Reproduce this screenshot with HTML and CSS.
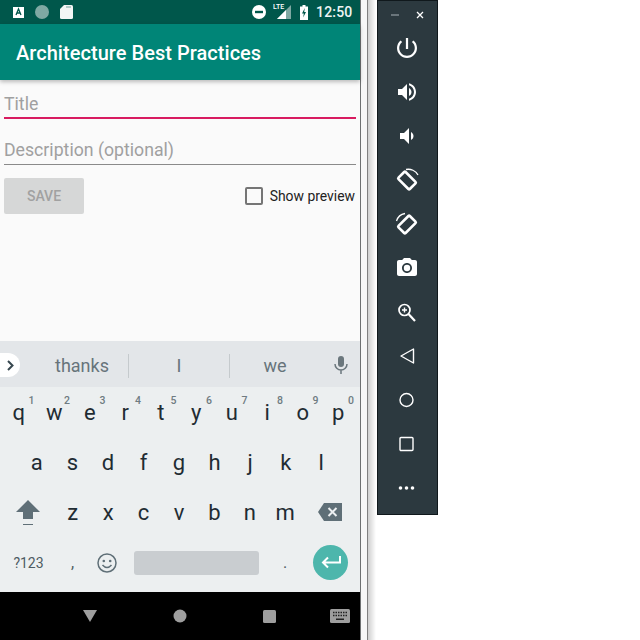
FILE: index.html
```html
<!DOCTYPE html>
<html lang="en">
<head>
    <meta charset="UTF-8">
    <meta name="viewport" content="width=device-width, initial-scale=1.0">
    <title>Architecture Best Practices</title>
    <link rel="stylesheet" href="styles.css">
</head>
<body>
<div class="desktop">

    <!-- Phone screen -->
    <div class="phone">
        <div class="status-bar">
            <div class="status-left">
                <svg width="11" height="11" viewBox="0 0 11 11"><rect width="11" height="11" fill="#fff"/><path d="M3 8 L5.500 2 L8 8 M4 6 H7" fill="none" stroke="#00574b" stroke-width="1.300"/></svg>
                <svg width="14" height="14" viewBox="0 0 14 14"><circle cx="7" cy="7" r="7" fill="#7fa9a3"/></svg>
                <svg width="13" height="14" viewBox="0 0 13 14"><path d="M4 0 H11.500 Q13 0 13 1.500 V12.500 Q13 14 11.500 14 H1.500 Q0 14 0 12.500 V4 Z" fill="#f2f6f5"/><path d="M6 2 H11" stroke="#9dbdb8" stroke-width="1.500"/></svg>
            </div>
            <div class="status-right">
                <svg width="14" height="14" viewBox="0 0 14 14"><circle cx="7" cy="7" r="7" fill="#fff"/><rect x="3" y="5.800" width="8" height="2.400" fill="#00574b"/></svg>
                <div class="signal">
                    <span class="lte">LTE</span>
                    <svg width="14" height="14" viewBox="0 0 14 14"><path d="M14 0 V14 H0 Z" fill="#7fa9a3"/><path d="M9 5 V14 H0 Z" fill="#fff"/></svg>
                </div>
                <svg class="battery" width="8" height="15" viewBox="0 0 8 15"><path d="M2.500 0 H5.500 V1.500 H8 V15 H0 V1.500 H2.500 Z" fill="#fff"/><path d="M4.800 3 L2 8.500 H3.800 L3.200 12.500 L6 7 H4.200 Z" fill="#00574b"/></svg>
                <span class="clock">12:50</span>
            </div>
        </div>
        <div class="app-bar">Architecture Best Practices</div>

        <div class="content">
            <div class="field field-active">Title</div>
            <div class="field">Description (optional)</div>
            <div class="actions">
                <button class="save-btn">SAVE</button>
                <label class="preview"><span class="checkbox"></span>Show preview</label>
            </div>
        </div>

        <!-- Keyboard -->
        <div class="suggestions">
            <span class="chevron">
                <svg width="7" height="11" viewBox="0 0 7 11"><path d="M1 1 L5.500 5.500 L1 10" fill="none" stroke="#37474f" stroke-width="2"/></svg>
            </span>
            <span class="word word-1">thanks</span>
            <span class="word word-2">I</span>
            <span class="word word-3">we</span>
            <svg class="mic" width="14" height="18" viewBox="0 0 14 18"><rect x="4" y="0" width="6" height="11" rx="3" fill="#6b777d"/><path d="M1 8 A6 6 0 0 0 13 8 M7 14 V18" fill="none" stroke="#6b777d" stroke-width="1.500"/></svg>
        </div>
        <div class="keys">
            <div class="row row-top">
                <span class="key">q<sup>1</sup></span>
                <span class="key">w<sup>2</sup></span>
                <span class="key">e<sup>3</sup></span>
                <span class="key">r<sup>4</sup></span>
                <span class="key">t<sup>5</sup></span>
                <span class="key">y<sup>6</sup></span>
                <span class="key">u<sup>7</sup></span>
                <span class="key">i<sup>8</sup></span>
                <span class="key">o<sup>9</sup></span>
                <span class="key">p<sup>0</sup></span>
            </div>
            <div class="row row-mid">
                <span class="key">a</span>
                <span class="key">s</span>
                <span class="key">d</span>
                <span class="key">f</span>
                <span class="key">g</span>
                <span class="key">h</span>
                <span class="key">j</span>
                <span class="key">k</span>
                <span class="key">l</span>
            </div>
            <div class="row row-low">
                <span class="key key-side">
                    <svg width="24" height="25" viewBox="0 0 24 25"><path d="M12 0 L24 12 H17 V19 H7 V12 H0 Z" fill="#5f6f77"/><rect x="7" y="24" width="10" height="1" fill="#5f6f77"/></svg>
                </span>
                <span class="key">z</span>
                <span class="key">x</span>
                <span class="key">c</span>
                <span class="key">v</span>
                <span class="key">b</span>
                <span class="key">n</span>
                <span class="key">m</span>
                <span class="key key-side">
                    <svg width="24" height="18" viewBox="0 0 24 18"><path d="M6 0 H24 V18 H6 L0 9 Z" fill="#5f6f77"/><path d="M10.500 5 L18.500 13 M18.500 5 L10.500 13" stroke="#eceff1" stroke-width="2"/></svg>
                </span>
            </div>
            <div class="row row-bottom">
                <span class="sym">?123</span>
                <span class="punct comma">,</span>
                <svg class="smile" width="20" height="20" viewBox="0 0 20 20"><circle cx="10" cy="10" r="9" fill="none" stroke="#5f6f77" stroke-width="1.500"/><circle cx="6.800" cy="8" r="1.300" fill="#5f6f77"/><circle cx="13.200" cy="8" r="1.300" fill="#5f6f77"/><path d="M5.500 12 Q10 17 14.500 12" fill="none" stroke="#5f6f77" stroke-width="1.500"/></svg>
                <span class="spacebar"></span>
                <span class="punct period">.</span>
                <span class="enter">
                    <svg width="20" height="13" viewBox="0 0 20 13"><path d="M19 0 V6.500 H2 M7 1.500 L2 6.500 L7 11.500" fill="none" stroke="#fff" stroke-width="2"/></svg>
                </span>
            </div>
        </div>

        <div class="nav-bar">
            <svg class="nav-back" width="14" height="12" viewBox="0 0 14 12"><path d="M0 0 H14 L7 12 Z" fill="#9e9e9e"/></svg>
            <svg class="nav-home" width="14" height="14" viewBox="0 0 14 14"><circle cx="7" cy="7" r="6.500" fill="#9e9e9e"/></svg>
            <svg class="nav-recent" width="13" height="13" viewBox="0 0 13 13"><rect width="13" height="13" rx="1.500" fill="#9e9e9e"/></svg>
            <svg class="nav-kbd" width="20" height="14" viewBox="0 0 20 14"><rect width="20" height="14" rx="1.500" fill="#9e9e9e"/><path d="M3 3.500 H17 M3 6.500 H17" stroke="#222" stroke-width="1.500" stroke-dasharray="1.500 1"/><rect x="6" y="9.500" width="8" height="1.500" fill="#222"/></svg>
        </div>
    </div>

    <div class="window-edge"></div>

    <!-- Emulator side toolbar -->
    <div class="toolbar">
        <div class="window-btns">
            <svg width="8" height="8" viewBox="0 0 8 8"><path d="M0 4 H8" stroke="#8d979c" stroke-width="1.300"/></svg>
            <svg width="8" height="8" viewBox="0 0 8 8"><path d="M1 1 L7 7 M7 1 L1 7" stroke="#fff" stroke-width="1.300"/></svg>
        </div>
        <svg class="tool" viewBox="3 3 18 18"><path fill="#fff" d="M13 3h-2v10h2V3zm4.830 2.170l-1.420 1.420C17.990 7.860 19 9.810 19 12c0 3.870-3.130 7-7 7s-7-3.130-7-7c0-2.190 1.010-4.140 2.580-5.420L6.170 5.170C4.230 6.820 3 9.260 3 12c0 4.970 4.030 9 9 9s9-4.030 9-9c0-2.740-1.230-5.180-3.170-6.830z"/></svg>
        <svg class="tool" viewBox="2 2 20 20"><path fill="#fff" d="M3 9v6h4l5 5V4L7 9H3zm13.500 3c0-1.770-1.020-3.290-2.500-4.030v8.050c1.480-.73 2.500-2.250 2.500-4.020zM14 3.230v2.060c2.890.86 5 3.540 5 6.710s-2.110 5.850-5 6.710v2.060c4.010-.91 7-4.490 7-8.770s-2.990-7.860-7-8.770z"/></svg>
        <svg class="tool" viewBox="2 2 20 20"><path fill="#fff" d="M18.500 12c0-1.770-1.020-3.290-2.500-4.030v8.050c1.480-.73 2.500-2.250 2.500-4.020zM5 9v6h4l5 5V4L9 9H5z"/></svg>
        <svg class="tool tool-rotate" viewBox="0 0 24 24"><rect x="7" y="4.500" width="10" height="16" rx="1" transform="rotate(-45 12 12.500)" fill="none" stroke="#fff" stroke-width="2.600"/><path d="M11 1.500 A11 11 0 0 1 23 7" fill="none" stroke="#fff" stroke-width="1.300"/></svg>
        <svg class="tool tool-rotate" viewBox="0 0 24 24"><rect x="7" y="4.500" width="10" height="16" rx="1" transform="rotate(45 12 12.500)" fill="none" stroke="#fff" stroke-width="2.600"/><path d="M1.500 9 A11 11 0 0 1 10 1.500" fill="none" stroke="#fff" stroke-width="1.300"/></svg>
        <svg class="tool" viewBox="2 2 20 20"><circle cx="12" cy="12" r="3.200" fill="#fff"/><path fill="#fff" d="M9 2L7.170 4H4c-1.100 0-2 .9-2 2v12c0 1.100.9 2 2 2h16c1.100 0 2-.9 2-2V6c0-1.100-.9-2-2-2h-3.170L15 2H9zm3 15c-2.760 0-5-2.240-5-5s2.240-5 5-5 5 2.240 5 5-2.240 5-5 5z"/></svg>
        <svg class="tool" viewBox="0 0 20 20"><circle cx="7.500" cy="8" r="5.500" fill="none" stroke="#fff" stroke-width="1.700"/><path d="M5 8 H10 M7.500 5.500 V10.500" stroke="#fff" stroke-width="1.400"/><path d="M11.500 12 L18 19" stroke="#fff" stroke-width="2.200"/></svg>
        <svg class="tool" viewBox="0 0 20 20"><path d="M16.500 3 V17 L4 10 Z" fill="none" stroke="#fff" stroke-width="1.400" stroke-linejoin="round"/></svg>
        <svg class="tool" viewBox="0 0 20 20"><circle cx="9.500" cy="10" r="6.500" fill="none" stroke="#fff" stroke-width="1.400"/></svg>
        <svg class="tool" viewBox="0 0 20 20"><rect x="3" y="3.500" width="13" height="13" rx="1" fill="none" stroke="#fff" stroke-width="1.400"/></svg>
        <svg class="tool" viewBox="0 0 20 20"><circle cx="3.500" cy="10" r="1.800" fill="#fff"/><circle cx="9.500" cy="10" r="1.800" fill="#fff"/><circle cx="15.500" cy="10" r="1.800" fill="#fff"/></svg>
    </div>
</div>
</body>
</html>
```
FILE: styles.css
```css
* {
    box-sizing: border-box;
}

body {
    margin: 0;
    background: #fff;
    font-family: Roboto, "Liberation Sans", sans-serif;
}

.desktop {
    display: flex;
    align-items: flex-start;
    width: 640px;
    height: 640px;
    overflow: hidden;
}

/* Phone */
.phone {
    display: flex;
    flex-direction: column;
    width: 360px;
    height: 640px;
    flex-shrink: 0;
}

.status-bar {
    display: flex;
    justify-content: space-between;
    align-items: center;
    height: 24px;
    background: #00574b;
    padding: 0 8px 0 13px;
    color: #fff;
}

.status-left {
    display: flex;
    align-items: center;
    gap: 11px;
}

.status-right {
    display: flex;
    align-items: center;
}

.signal {
    position: relative;
    display: flex;
    margin-left: 11px;
}

.lte {
    position: absolute;
    left: -4px;
    top: -2px;
    font-size: 7px;
    font-weight: 500;
}

.battery {
    margin-left: 9px;
}

.clock {
    width: 36px;
    margin-left: 8px;
    font-size: 14px;
    font-weight: 500;
    letter-spacing: 0.2px;
    color: #eef5f4;
}

.app-bar {
    display: flex;
    align-items: center;
    height: 56px;
    background: #008577;
    padding: 2px 0 0 16px;
    color: #fff;
    font-size: 20px;
    font-weight: 500;
    letter-spacing: 0.04px;
    position: relative;
    box-shadow: 0 2px 4px rgba(0, 0, 0, 0.25);
}

.content {
    flex: 1;
    background: #fafafa;
    padding: 0 4px;
}

.field {
    height: 32px;
    margin-top: 7px;
    padding-top: 5px;
    border-bottom: 1px solid #8a8a8a;
    color: #a0a0a0;
    font-size: 17.7px;
    line-height: 24px;
}

.field-active {
    height: 32px;
    margin-top: 7px;
    border-bottom: 2px solid #d81b60;
}

.field + .field {
    margin-top: 14px;
}

.actions {
    display: flex;
    justify-content: space-between;
    align-items: center;
    margin-top: 13px;
}

.save-btn {
    width: 80px;
    height: 36px;
    border: none;
    border-radius: 2px;
    background: #d6d7d7;
    color: #a1a1a1;
    font-family: inherit;
    font-size: 14px;
    font-weight: 500;
}

.preview {
    display: flex;
    align-items: center;
    gap: 7px;
    margin-right: 1px;
    font-size: 13.9px;
    color: #222;
}

.checkbox {
    width: 18px;
    height: 18px;
    border: 2px solid #757575;
    border-radius: 2px;
}

/* Keyboard */
.suggestions {
    position: relative;
    height: 46px;
    background: #e3e6e9;
    color: #67747b;
    font-size: 18px;
}

.chevron {
    position: absolute;
    left: 0;
    top: 12px;
    display: flex;
    align-items: center;
    justify-content: center;
    width: 20px;
    height: 24px;
    background: #fff;
    border-radius: 0 12px 12px 0;
}

.word {
    position: absolute;
    top: 0;
    height: 46px;
    line-height: 50px;
    text-align: center;
}

.word-1 {
    left: 30px;
    width: 104px;
}

.word-2 {
    left: 128px;
    width: 102px;
    border-left: 1px solid #c5cacd;
    border-right: 1px solid #c5cacd;
    height: 24px;
    top: 13px;
    line-height: 24px;
}

.word-3 {
    left: 230px;
    width: 90px;
}

.mic {
    position: absolute;
    left: 334px;
    top: 15px;
}

.keys {
    height: 205px;
    background: #eceff0;
    color: #1f2c33;
    font-size: 22px;
}

.row {
    display: flex;
    align-items: center;
}

.row-top {
    height: 50px;
    padding: 0 4px 0 1px;
}

.row-mid {
    height: 50px;
    padding: 0 21px 0 19px;
}

.row-low {
    height: 50px;
    padding: 0 3px 0 1px;
}

.row-bottom {
    position: relative;
    height: 51px;
}

.key {
    position: relative;
    flex: 1;
    text-align: center;
}

.key sup {
    position: absolute;
    top: -5px;
    right: 2px;
    font-size: 10.5px;
    line-height: 12px;
    color: #6f7b81;
    font-weight: 500;
}

.key-side {
    flex: 0 0 54px;
    display: flex;
    justify-content: center;
}

.sym {
    width: 57px;
    text-align: center;
    font-size: 14px;
    color: #4e5c63;
}

.punct {
    font-size: 16px;
    color: #4e5c63;
    text-align: center;
}

.comma {
    width: 31px;
}

.smile {
    margin-left: 9px;
}

.spacebar {
    width: 125px;
    height: 24px;
    margin-left: 17px;
    border-radius: 3px;
    background: #c9cdd0;
}

.period {
    width: 52px;
}

.enter {
    display: flex;
    align-items: center;
    justify-content: center;
    width: 35px;
    height: 35px;
    margin-left: 2px;
    border-radius: 50%;
    background: #4db6ac;
}

.nav-bar {
    position: relative;
    display: flex;
    align-items: center;
    height: 48px;
    background: #000;
}

.nav-back {
    margin-left: 83px;
}

.nav-home {
    margin-left: 76px;
}

.nav-recent {
    margin-left: 76px;
}

.nav-kbd {
    margin-left: 54px;
}

/* Edge of the emulator window */
.window-edge {
    width: 17px;
    height: 640px;
    flex-shrink: 0;
    border-left: 1px solid #6e7071;
    background: linear-gradient(to right, #f7f7f7 0, #f7f7f7 6px, #808080 6px, #808080 7px, #cfcfcf 7px, #fff 15px);
}

/* Side toolbar */
.toolbar {
    display: flex;
    flex-direction: column;
    align-items: center;
    width: 61px;
    height: 515px;
    flex-shrink: 0;
    background: #2c393f;
    border: 1px solid #10181c;
    padding-right: 1px;
    gap: 24px;
}

.window-btns {
    display: flex;
    justify-content: space-between;
    width: 33px;
    margin-top: 10px;
    margin-bottom: -5px;
}

.tool {
    width: 20px;
    height: 20px;
}

.tool-rotate {
    width: 24px;
    height: 24px;
    margin: -2px 0;
}
```
